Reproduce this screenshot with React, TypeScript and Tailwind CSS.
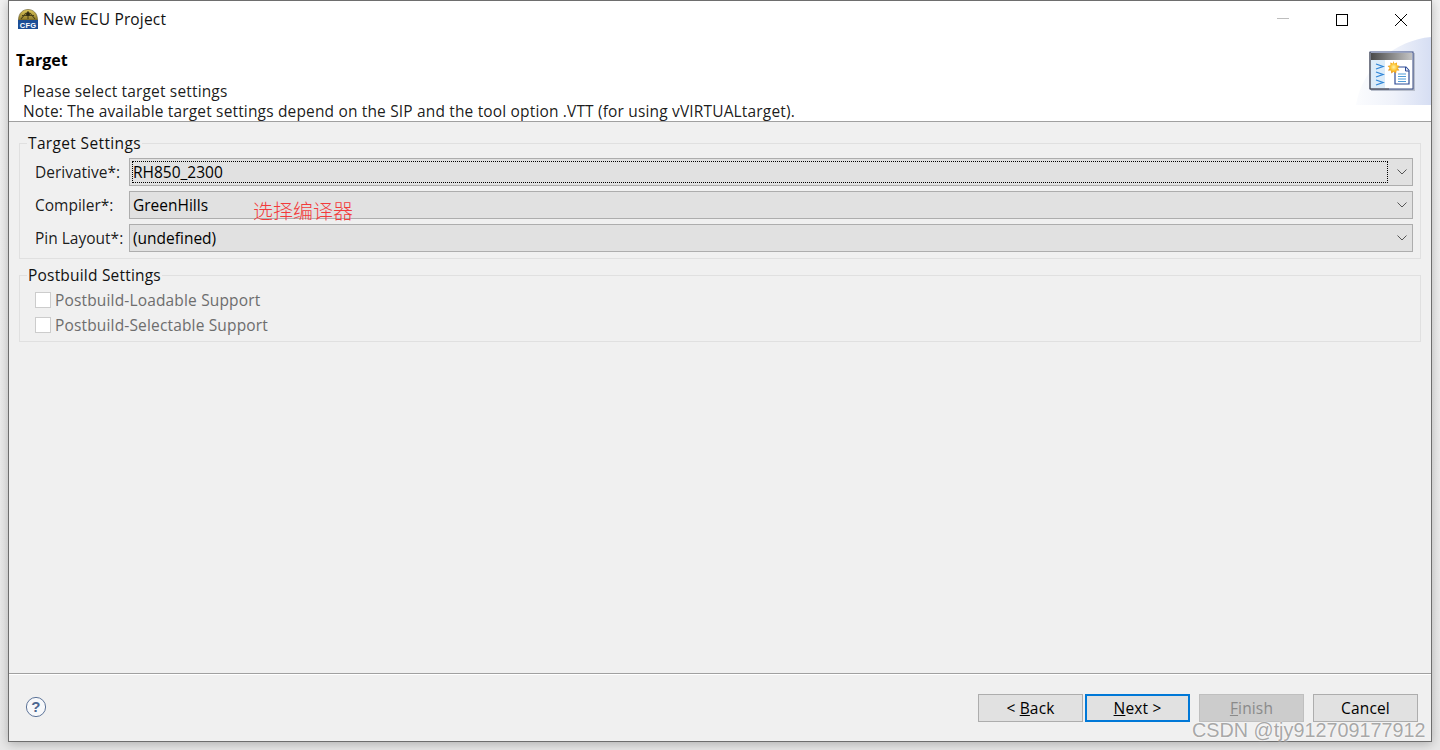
import React from "react";

const font = { fontFamily: '"Open Sans", "Noto Sans", sans-serif' };

function AppIcon() {
  return (
    <svg width="20" height="20" viewBox="0 0 20 20" className="shrink-0">
      <defs>
        <linearGradient id="gold" x1="0" y1="0" x2="0" y2="1">
          <stop offset="0" stopColor="#e0c95c" />
          <stop offset="1" stopColor="#8f7a2a" />
        </linearGradient>
      </defs>
      <path d="M0.5 11 C0.5 4 5 0.5 10 0.5 C15 0.5 19.5 4 19.5 11 Z" fill="url(#gold)" stroke="#5c5120" strokeWidth="0.6" />
      <path d="M3 10 L8 4 M17 10 L12 4 M10 2 V10 M4 6.5 H16" stroke="#4a4118" strokeWidth="1.1" fill="none" />
      <circle cx="10" cy="5" r="2" fill="#2f2a12" />
      <rect x="0" y="11" width="20" height="9" fill="#1c4e96" />
      <text x="10" y="18.6" textAnchor="middle" fontSize="7.5" fontWeight="700" fill="#ffffff" fontFamily="Liberation Sans, sans-serif">CFG</text>
    </svg>
  );
}

function BannerArt() {
  return (
    <svg width="75" height="68" viewBox="0 0 75 68" className="absolute right-0 top-[36px]">
      <defs>
        <linearGradient id="arc" x1="0" y1="0" x2="1" y2="0">
          <stop offset="0" stopColor="#fbfcfe" />
          <stop offset="0.5" stopColor="#eff2fa" />
          <stop offset="1" stopColor="#d6def3" />
        </linearGradient>
      </defs>
      <path d="M0 68 C6 30 40 3 75 0 V68 Z" fill="url(#arc)" />
    </svg>
  );
}

function BannerIcon() {
  return (
    <svg width="46" height="40" viewBox="0 0 46 40" className="absolute right-[16px] top-[50px]">
      <defs>
        <linearGradient id="bar" x1="0" y1="0" x2="1" y2="0">
          <stop offset="0" stopColor="#4a4a4a" />
          <stop offset="1" stopColor="#c4c4c4" />
        </linearGradient>
        <radialGradient id="sun">
          <stop offset="0" stopColor="#fff3a8" />
          <stop offset="0.6" stopColor="#fbbf2a" />
          <stop offset="1" stopColor="#e08a1c" />
        </radialGradient>
      </defs>
      <rect x="2" y="2" width="44" height="38" fill="#b9bfcc" />
      <rect x="1" y="1" width="43" height="37" fill="#ffffff" stroke="#35477f" strokeWidth="1" />
      <path d="M1 1 V38 H20" fill="none" stroke="#555" strokeWidth="1" />
      <rect x="2" y="2" width="41" height="7" fill="url(#bar)" />
      <rect x="2" y="9" width="14" height="28" fill="#dcecf9" />
      <path d="M7 13 L14 15.5 L7 18 M7 21 L14 23.5 L7 26 M7 29 L14 31.5 L7 34" fill="none" stroke="#2f86d8" strokeWidth="1.3" />
      <path d="M26 16 H37 L40 19.5 V33 H26 Z" fill="#ffffff" stroke="#2c4a96" strokeWidth="1.2" />
      <path d="M36.5 16 V20 H40" fill="#dfe6f5" stroke="#2c4a96" strokeWidth="1" />
      <path d="M29 23 H37 M29 25.5 H37 M29 28 H37 M29 30.5 H37" stroke="#4f9bd8" strokeWidth="1" />
      <path d="M24 10 L25.4 12.6 L28 11.4 L28 14.2 L30.8 15 L28.8 17 L30.4 19.4 L27.6 19.6 L27 22.4 L24.6 20.8 L22.4 22.4 L21.8 19.6 L19 19.4 L20.6 17 L18.6 15 L21.4 14.2 L21.4 11.4 L24 12.6 Z" fill="url(#sun)" />
    </svg>
  );
}

function Chevron() {
  return (
    <svg width="10" height="6" viewBox="0 0 10 6" className="shrink-0">
      <path d="M0.5 0.5 L5 5 L9.5 0.5" fill="none" stroke="#555555" strokeWidth="1" />
    </svg>
  );
}

function Select({ value, focused }: { value: React.ReactNode; focused?: boolean }) {
  return (
    <div className="flex h-[28px] flex-1 items-center border border-[#adadad] bg-[#e1e1e1] pl-[2px] pr-[5px] tracking-normal">
      <div className={`flex h-[22px] flex-1 items-center ${focused ? "border border-dotted border-black" : "border border-transparent"}`}>
        {value}
      </div>
      <div className="flex w-[19px] justify-end">
        <Chevron />
      </div>
    </div>
  );
}

function Row({ label, value, focused }: { label: string; value: React.ReactNode; focused?: boolean }) {
  return (
    <div className="flex h-[28px] items-center">
      <div className="w-[94px] shrink-0 tracking-normal text-black/90">{label}</div>
      <Select value={value} focused={focused} />
    </div>
  );
}

function Check({ label }: { label: string }) {
  return (
    <div className="flex h-[16px] items-center gap-[4px] text-[#6d6d6d]">
      <div className="h-[16px] w-[16px] border border-[#cccccc] bg-white" />
      <span>{label}</span>
    </div>
  );
}

function Btn({ children, variant }: { children: React.ReactNode; variant?: "focus" | "disabled" }) {
  const cls =
    variant === "focus"
      ? "border-2 border-[#0078d7] bg-[#e1e1e1] text-black"
      : variant === "disabled"
        ? "border border-[#bfbfbf] bg-[#cccccc] text-[#8a8a8a]"
        : "border border-[#adadad] bg-[#e1e1e1] text-black";
  return <div className={`flex h-[28px] w-[105px] items-center justify-center ${cls}`}>{children}</div>;
}

export default function App() {
  return (
    <div className="relative h-[750px] w-[1440px] overflow-hidden bg-gradient-to-b from-[#f2f2f2] to-[#e8e8e8] text-[15.5px] leading-[20px] tracking-[0.16px]" style={font}>
      <div className="ml-[8px] flex h-[742px] w-[1424px] flex-col border border-[#6e6e6e] bg-[#f0f0f0] shadow-[0_2px_10px_rgba(0,0,0,0.25)]">
        <div className="relative h-[120px] shrink-0 bg-white">
          <div className="flex h-[35px] items-center pl-[9px]">
            <AppIcon />
            <span className="ml-[5px] text-[#111]">New ECU Project</span>
            <div className="ml-auto flex items-center pt-[2px]">
              <svg width="14" height="14" viewBox="0 0 14 14" className="mr-[45px] mt-[-1px]"><path d="M0 6.5 H12" stroke="#bdbdbd" strokeWidth="1" /></svg>
              <svg width="12" height="12" viewBox="0 0 12 12" className="mr-[47px]"><rect x="0.5" y="0.5" width="11" height="11" fill="none" stroke="#000" strokeWidth="1" /></svg>
              <svg width="12" height="12" viewBox="0 0 12 12" className="mr-[24px]"><path d="M0 0 L12 12 M12 0 L0 12" stroke="#000" strokeWidth="1" /></svg>
            </div>
          </div>
          <BannerArt />
          <BannerIcon />
          <div className="mt-[14px] pl-[7px] text-[16px] font-bold leading-[20px] tracking-normal text-black">Target</div>
          <div className="mt-[11px] pl-[14px] text-black/90">Please select target settings</div>
          <div className="pl-[14px] text-black/90">Note: The available target settings depend on the SIP and the tool option .VTT (for using vVIRTUALtarget).</div>
        </div>
        <div className="h-[1px] shrink-0 bg-[#a0a0a0]" />
        <div className="flex-1 px-[10px] pt-[11px]">
          <fieldset className="m-0 flex h-[126px] flex-col gap-[5px] border border-[#e0e0e0] pl-[15px] pr-[7px] pt-[5px]">
            <legend className="ml-[-8px] px-[1px] tracking-[0.35px] text-[#111]">Target Settings</legend>
            <Row label="Derivative*:" value="RH850_2300" focused />
            <Row label="Compiler*:" value="GreenHills" />
            <Row label="Pin Layout*:" value="(undefined)" />
          </fieldset>
          <fieldset className="mt-[6px] flex h-[77px] flex-col gap-[9px] border border-[#e0e0e0] px-[15px] pt-[7px]">
            <legend className="ml-[-8px] px-[1px] tracking-[0.2px] text-[#111]">Postbuild Settings</legend>
            <Check label="Postbuild-Loadable Support" />
            <Check label="Postbuild-Selectable Support" />
          </fieldset>
        </div>
        <div className="h-[1px] shrink-0 bg-[#a0a0a0]" />
        <div className="h-[1px] shrink-0 bg-white" />
        <div className="flex h-[66px] shrink-0 items-start pl-[16px] pr-[13px] pt-[19px]">
          <svg width="22" height="22" viewBox="0 0 22 22" className="mt-[2px]">
            <circle cx="11" cy="11" r="9.6" fill="#f7f8fa" stroke="#5d7499" strokeWidth="1" />
            <text x="11" y="16.4" textAnchor="middle" fontSize="15" fontWeight="700" fill="#4d6690" fontFamily="Liberation Sans, sans-serif">?</text>
          </svg>
          <div className="ml-auto flex">
            <Btn>&lt;&nbsp;<span className="underline">B</span>ack</Btn>
            <div className="ml-[2px]"><Btn variant="focus"><span className="underline">N</span>ext &gt;</Btn></div>
            <div className="ml-[9px]"><Btn variant="disabled"><span className="underline">F</span>inish</Btn></div>
            <div className="ml-[9px]"><Btn>Cancel</Btn></div>
          </div>
        </div>
      </div>
      <div className="absolute left-[253px] top-[199px] text-[20px] leading-[24px] tracking-normal text-[#f23b3b]" style={{ fontFamily: '"Noto Sans CJK SC", sans-serif', fontWeight: 300 }}>选择编译器</div>
      <div className="absolute left-[1192px] top-[719px] text-[19.8px] leading-[22px] tracking-normal text-[#a8a8a8]" style={{ fontFamily: '"Liberation Sans", sans-serif', textShadow: "0 0 2px #ffffff, 0 0 1px #ffffff" }}>CSDN @tjy912709177912</div>
    </div>
  );
}
